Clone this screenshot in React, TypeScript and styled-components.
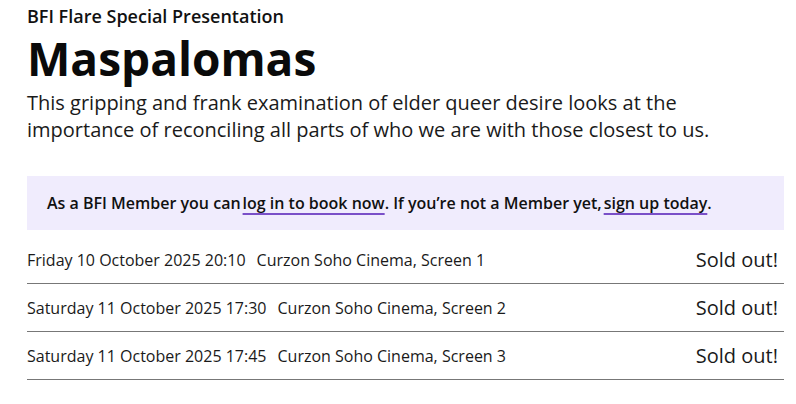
import styled, { createGlobalStyle } from 'styled-components';

const GlobalStyle = createGlobalStyle`
  body {
    margin: 0;
    background: #fff;
    font-family: "Open Sans", "Noto Sans", sans-serif;
    color: #111;
  }
`;

const Page = styled.div`
  width: 757px;
  padding: 5px 0 0 27px;
`;

const Eyebrow = styled.div`
  font-size: 18px;
  font-weight: 600;
  line-height: 22px;
`;

const Title = styled.h1`
  margin: 0;
  font-size: 46px;
  font-weight: 700;
  line-height: 62px;
  color: #0a0a0a;
`;

const Intro = styled.p`
  margin: 0;
  font-size: 20px;
  line-height: 27px;
  color: #1a1a1a;
`;

const Banner = styled.div`
  margin: 33px 0 6px;
  background: #f0ecfd;
  padding: 14px 20px;
  font-size: 16px;
  font-weight: 600;
  line-height: 26px;
`;

const Link = styled.a`
  margin-left: 2px;
  color: #111;
  text-decoration: underline;
  text-decoration-color: #7a4fc8;
  text-decoration-thickness: 2px;
  text-underline-offset: 4px;
`;

const Row = styled.div`
  display: flex;
  align-items: center;
  height: 47px;
  border-bottom: 1px solid #777;
  font-size: 16px;
  color: #1a1a1a;
`;

const When = styled.span`
  margin-right: 11px;
`;

const Status = styled.span`
  margin-left: auto;
  margin-right: 6px;
  font-size: 20px;
`;

const screenings = [
  { when: 'Friday 10 October 2025 20:10', where: 'Curzon Soho Cinema, Screen 1' },
  { when: 'Saturday 11 October 2025 17:30', where: 'Curzon Soho Cinema, Screen 2' },
  { when: 'Saturday 11 October 2025 17:45', where: 'Curzon Soho Cinema, Screen 3' },
];

const App = () => {
  return (
    <>
      <GlobalStyle />
      <Page>
        <Eyebrow>BFI Flare Special Presentation</Eyebrow>
        <Title>Maspalomas</Title>
        <Intro>
          This gripping and frank examination of elder queer desire looks at the
          importance of reconciling all parts of who we are with those closest to us.
        </Intro>
        <Banner>
          As a BFI Member you can<Link href="#">log in to book now</Link>. If you’re not a
          Member yet,<Link href="#">sign up today</Link>.
        </Banner>
        {screenings.map((s) => (
          <Row key={s.when}>
            <When>{s.when}</When>
            <span>{s.where}</span>
            <Status>Sold out!</Status>
          </Row>
        ))}
      </Page>
    </>
  );
};

export default App;
